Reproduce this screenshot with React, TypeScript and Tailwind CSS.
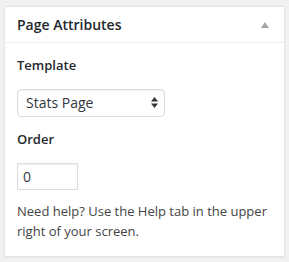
import React from "react";

export default function App() {
  return (
    <div
      className="w-[289px] h-[262px] bg-[#f1f1f1] pl-[4px] pt-[6px]"
      style={{ fontFamily: '"Open Sans", "Liberation Sans", sans-serif' }}
    >
      <div className="w-[281px] h-[251px] bg-white border border-[#e5e5e5] shadow-[0_1px_1px_rgba(0,0,0,0.04)]">
        <div className="h-[36px] flex items-center justify-between pl-[12px] pr-[15px] border-b border-[#eeeeee]">
          <h2 className="text-[14px] font-semibold text-[#23282d] leading-[1.4]">Page Attributes</h2>
          <svg width="8" height="6" viewBox="0 0 8 6" className="mt-[1px]">
            <polygon points="4,0 8,6 0,6" fill="#a0a5aa" />
          </svg>
        </div>
        <div className="px-[12px]">
          <p className="mt-[13px] text-[13px] leading-[19.5px] font-semibold text-[#23282d]">Template</p>
          <div className="mt-[13px] w-[148px] h-[28px] border border-[#dddddd] rounded-[4px] shadow-[inset_0_1px_2px_rgba(0,0,0,0.07)] flex items-center justify-between pl-[8px] pr-[6px]">
            <span className="text-[14px] text-[#32373c]">Stats Page</span>
            <svg width="7" height="11" viewBox="0 0 7 11">
              <polygon points="3.5,0 7,4.5 0,4.5" fill="#333" />
              <polygon points="0,6.5 7,6.5 3.5,11" fill="#333" />
            </svg>
          </div>
          <p className="mt-[13px] text-[13px] leading-[19.5px] font-semibold text-[#23282d]">Order</p>
          <div className="mt-[14px] w-[61px] h-[27px] border border-[#dddddd] shadow-[inset_0_1px_2px_rgba(0,0,0,0.07)] flex items-center pl-[5px]">
            <span className="text-[14px] text-[#32373c]">0</span>
          </div>
          <p className="mt-[12px] text-[13px] leading-[19.5px] text-[#444444]">
            Need help? Use the Help tab in the upper right of your screen.
          </p>
        </div>
      </div>
    </div>
  );
}
